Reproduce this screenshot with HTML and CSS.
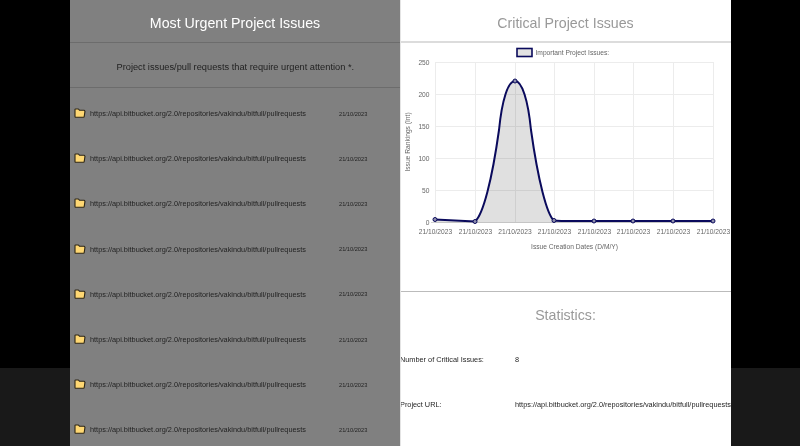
FILE: index.html
```html
<!DOCTYPE html>
<html lang="en">
<head>
<meta charset="utf-8">
<title>Most Urgent Project Issues</title>
<link rel="stylesheet" href="styles.css">
</head>
<body>
<main class="board">
  <section class="urgent">
    <h2 class="urgent-title">Most Urgent Project Issues</h2>
    <p class="urgent-sub">Project issues/pull requests that require urgent attention *.</p>
    <ul class="issues">
      <li class="issue"><svg class="folder" viewBox="0 0 12 10"><path d="M1 8.6 L1 1.6 Q1 1 1.6 1 L4.4 1 L5.4 2.2 L10 2.2 Q10.6 2.2 10.6 2.8 L11 3.2 L10.2 8.6 Q10.1 9.2 9.5 9.2 L1.6 9.2 Q1 9.2 1 8.6 Z"/></svg><span class="issue-url">https://api.bitbucket.org/2.0/repositories/vakindu/bitfull/pullrequests</span><span class="issue-date">21/10/2023</span></li>
      <li class="issue"><svg class="folder" viewBox="0 0 12 10"><path d="M1 8.6 L1 1.6 Q1 1 1.6 1 L4.4 1 L5.4 2.2 L10 2.2 Q10.6 2.2 10.6 2.8 L11 3.2 L10.2 8.6 Q10.1 9.2 9.5 9.2 L1.6 9.2 Q1 9.2 1 8.6 Z"/></svg><span class="issue-url">https://api.bitbucket.org/2.0/repositories/vakindu/bitfull/pullrequests</span><span class="issue-date">21/10/2023</span></li>
      <li class="issue"><svg class="folder" viewBox="0 0 12 10"><path d="M1 8.6 L1 1.6 Q1 1 1.6 1 L4.4 1 L5.4 2.2 L10 2.2 Q10.6 2.2 10.6 2.8 L11 3.2 L10.2 8.6 Q10.1 9.2 9.5 9.2 L1.6 9.2 Q1 9.2 1 8.6 Z"/></svg><span class="issue-url">https://api.bitbucket.org/2.0/repositories/vakindu/bitfull/pullrequests</span><span class="issue-date">21/10/2023</span></li>
      <li class="issue"><svg class="folder" viewBox="0 0 12 10"><path d="M1 8.6 L1 1.6 Q1 1 1.6 1 L4.4 1 L5.4 2.2 L10 2.2 Q10.6 2.2 10.6 2.8 L11 3.2 L10.2 8.6 Q10.1 9.2 9.5 9.2 L1.6 9.2 Q1 9.2 1 8.6 Z"/></svg><span class="issue-url">https://api.bitbucket.org/2.0/repositories/vakindu/bitfull/pullrequests</span><span class="issue-date">21/10/2023</span></li>
      <li class="issue"><svg class="folder" viewBox="0 0 12 10"><path d="M1 8.6 L1 1.6 Q1 1 1.6 1 L4.4 1 L5.4 2.2 L10 2.2 Q10.6 2.2 10.6 2.8 L11 3.2 L10.2 8.6 Q10.1 9.2 9.5 9.2 L1.6 9.2 Q1 9.2 1 8.6 Z"/></svg><span class="issue-url">https://api.bitbucket.org/2.0/repositories/vakindu/bitfull/pullrequests</span><span class="issue-date">21/10/2023</span></li>
      <li class="issue"><svg class="folder" viewBox="0 0 12 10"><path d="M1 8.6 L1 1.6 Q1 1 1.6 1 L4.4 1 L5.4 2.2 L10 2.2 Q10.6 2.2 10.6 2.8 L11 3.2 L10.2 8.6 Q10.1 9.2 9.5 9.2 L1.6 9.2 Q1 9.2 1 8.6 Z"/></svg><span class="issue-url">https://api.bitbucket.org/2.0/repositories/vakindu/bitfull/pullrequests</span><span class="issue-date">21/10/2023</span></li>
      <li class="issue"><svg class="folder" viewBox="0 0 12 10"><path d="M1 8.6 L1 1.6 Q1 1 1.6 1 L4.4 1 L5.4 2.2 L10 2.2 Q10.6 2.2 10.6 2.8 L11 3.2 L10.2 8.6 Q10.1 9.2 9.5 9.2 L1.6 9.2 Q1 9.2 1 8.6 Z"/></svg><span class="issue-url">https://api.bitbucket.org/2.0/repositories/vakindu/bitfull/pullrequests</span><span class="issue-date">21/10/2023</span></li>
      <li class="issue"><svg class="folder" viewBox="0 0 12 10"><path d="M1 8.6 L1 1.6 Q1 1 1.6 1 L4.4 1 L5.4 2.2 L10 2.2 Q10.6 2.2 10.6 2.8 L11 3.2 L10.2 8.6 Q10.1 9.2 9.5 9.2 L1.6 9.2 Q1 9.2 1 8.6 Z"/></svg><span class="issue-url">https://api.bitbucket.org/2.0/repositories/vakindu/bitfull/pullrequests</span><span class="issue-date">21/10/2023</span></li>
    </ul>
  </section>
  <section class="critical">
    <h2 class="critical-title">Critical Project Issues</h2>
    <svg class="chart" viewBox="400 43 331 248">
      <g class="grid">
        <path d="M435 62.5H713M435 94.5H713M435 126.5H713M435 158.5H713M435 190.5H713"/>
        <path d="M435.5 62V222M475.5 62V222M515.5 62V222M554.5 62V222M594.5 62V222M633.5 62V222M673.5 62V222M713.5 62V222"/>
      </g>
      <path class="zero" d="M431 222.5H713"/>
      <path class="area" d="M435 219.5 C445 220 465 221 475 221.5 C483 215 492 180 499 130 C502 100 508 81 515 81 C522 81 528 100 531 130 C538 180 547 215 554 220.5 C561 221.5 584 221 594 221 L713 221 V222.5 H435 Z"/>
      <path class="line" d="M435 219.5 C445 220 465 221 475 221.5 C483 215 492 180 499 130 C502 100 508 81 515 81 C522 81 528 100 531 130 C538 180 547 215 554 220.5 C561 221.5 584 221 594 221 L713 221"/>
      <g class="points">
        <circle cx="435" cy="219.5" r="2"/><circle cx="475" cy="221.5" r="2"/><circle cx="515" cy="81" r="2"/><circle cx="554" cy="220.5" r="2"/><circle cx="594" cy="221" r="2"/><circle cx="633" cy="221" r="2"/><circle cx="673" cy="221" r="2"/><circle cx="713" cy="221" r="2"/>
      </g>
      <rect class="legend-box" x="517" y="48.5" width="15" height="8"/>
      <text class="legend" x="535.5" y="54.5">Important Project Issues:</text>
      <g class="y-ticks">
        <text x="429.5" y="64.5">250</text><text x="429.5" y="96.5">200</text><text x="429.5" y="128.5">150</text><text x="429.5" y="160.5">100</text><text x="429.5" y="192.5">50</text><text x="429.5" y="224.5">0</text>
      </g>
      <g class="x-ticks">
        <text x="435.5" y="234">21/10/2023</text><text x="475.5" y="234">21/10/2023</text><text x="515" y="234">21/10/2023</text><text x="554.5" y="234">21/10/2023</text><text x="594.5" y="234">21/10/2023</text><text x="633.5" y="234">21/10/2023</text><text x="673.5" y="234">21/10/2023</text><text x="713.5" y="234">21/10/2023</text>
      </g>
      <text class="axis-title" x="574.5" y="248.5">Issue Creation Dates (D/M/Y)</text>
      <text class="axis-title" transform="translate(409.5 142) rotate(-90)">Issue Rankings (Int)</text>
    </svg>
    <section class="stats">
      <h2 class="stats-title">Statistics:</h2>
      <div class="stat"><span class="stat-label">Number of Critical Issues:</span><span>8</span></div>
      <div class="stat"><span class="stat-label">Project URL:</span><span>https://api.bitbucket.org/2.0/repositories/vakindu/bitfull/pullrequests</span></div>
    </section>
  </section>
</main>
</body>
</html>
```
FILE: styles.css
```css
* { box-sizing: border-box; }
html, body { margin: 0; height: 100%; }
body {
  height: 446px;
  overflow: hidden;
  background: linear-gradient(#000 368px, #191919 368px);
  font-family: "Liberation Sans", Arial, sans-serif;
}
.board {
  display: grid;
  grid-template-columns: 330px 331px;
  width: 661px;
  height: 446px;
  margin-left: 70px;
  overflow: hidden;
  filter: blur(.25px);
}
.urgent { background: #808080; color: #1f1f1f; }
.urgent-title, .critical-title {
  margin: 0;
  height: 43px;
  line-height: 46px;
  font-size: 14.2px;
  font-weight: 400;
  text-align: center;
}
.urgent-title { color: #fff; border-bottom: 1px solid #6c6c6c; }
.urgent-sub {
  margin: 0 0 3px;
  height: 45px;
  padding-left: 46.5px;
  line-height: 48px;
  font-size: 9.25px;
  border-bottom: 1px solid #6c6c6c;
}
.issues { margin: 0; padding: 0; list-style: none; }
.issue {
  display: flex;
  align-items: center;
  height: 45.2px;
  padding-left: 4px;
  font-size: 7.33px;
}
.folder { width: 12px; height: 10px; margin: -1px 4px 0 0; flex: none; }
.folder path { fill: #ffd873; stroke: #2e2717; stroke-width: 1.1; stroke-linejoin: round; }
.issue-url { width: 249px; flex: none; }
.issue-date { font-size: 5.67px; }
.critical { background: #fff; color: #1f1f1f; border-left: 1px solid #e4e4e4; overflow: hidden; }
.critical-title { color: #999; border-bottom: 2px solid #dcdcdc; margin-left: -1px; }
.chart { display: block; width: 331px; height: 248px; margin-left: -1px; }
.grid path { fill: none; stroke: #ececec; stroke-width: 1; }
.zero { stroke: #d2d2d2; stroke-width: 1; fill: none; }
.area { fill: #000; fill-opacity: .12; }
.line { fill: none; stroke: #0a0a5c; stroke-width: 2; }
.points circle { fill: #8f8fae; stroke: #0a0a5c; stroke-width: 1; }
.legend-box { fill: #e2e2e2; stroke: #0a0a5c; stroke-width: 1.6; }
.chart text { font-family: "Liberation Sans", Arial, sans-serif; font-size: 6.67px; fill: #666; }
.y-ticks text { text-anchor: end; }
.x-ticks text { text-anchor: middle; }
.axis-title { text-anchor: middle; }
.stats { border-top: 1px solid #bbb; margin-left: -1px; }
.stats-title {
  margin: 0;
  height: 45px;
  line-height: 46px;
  font-size: 14.2px;
  font-weight: 400;
  text-align: center;
  color: #999;
}
.stat {
  display: flex;
  align-items: center;
  height: 45px;
  font-size: 7.33px;
  white-space: nowrap;
}
.stat-label { width: 115px; flex: none; }
```
